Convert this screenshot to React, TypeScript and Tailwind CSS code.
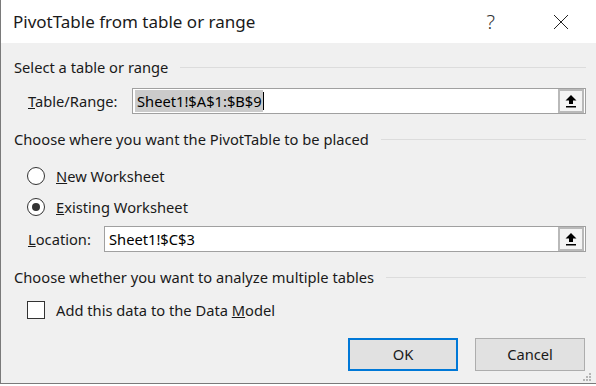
import React from "react";

const font = { fontFamily: '"Segoe UI", "Noto Sans", "Open Sans", sans-serif' };

function UploadIcon() {
  return (
    <svg width="12" height="14" viewBox="0 0 12 14">
      <path d="M6 1 L11.5 6.5 L8 6.5 L8 10 L4 10 L4 6.5 L0.5 6.5 Z" fill="#000" />
      <rect x="1" y="12" width="10" height="1.5" fill="#000" />
    </svg>
  );
}

function RangeInput({ children }: { children: React.ReactNode }) {
  return (
    <div className="flex-1 h-[26px] bg-white border border-[#a0a0a0] flex items-center pl-[1px] pr-[1px]">
      <div className="flex-1 flex items-center h-full">{children}</div>
      <div className="w-[26px] h-[24px] border-2 border-[#b9b9b9] bg-[#f4f4f4] flex items-center justify-center">
        <UploadIcon />
      </div>
    </div>
  );
}

function Heading({ text }: { text: string }) {
  return (
    <div className="h-[20px] flex items-center pl-[13px] pr-[11px]">
      <span className="text-[14.7px] text-[#1a1a1a] whitespace-nowrap">{text}</span>
      <div className="flex-1 h-px bg-[#dcdcdc] ml-[12px]" />
    </div>
  );
}

export default function App() {
  return (
    <div className="w-[596px] h-[386px] bg-white overflow-hidden" style={font}>
      <div className="w-[600px] h-[384px] border-l border-b border-[#7a7a7a] flex flex-col">
        <div className="h-[43px] bg-white flex items-center pl-[12px] shrink-0">
          <span className="text-[17px] text-[#1a1a1a] flex-1">PivotTable from table or range</span>
          <span className="text-[20px] font-light text-[#333] mr-[58px] mt-[1px]">?</span>
          <svg width="16" height="16" viewBox="0 0 16 16" className="mr-[31px]">
            <path d="M1 1 L15 15 M15 1 L1 15" stroke="#222" strokeWidth="1" />
          </svg>
        </div>
        <div className="flex-1 bg-[#f0f0f0] flex flex-col w-[596px]">
          <div className="h-[14px]" />
          <Heading text="Select a table or range" />
          <div className="h-[11px]" />
          <div className="h-[26px] flex items-center pl-[27px] pr-[11px]">
            <span className="text-[14.7px] text-[#1a1a1a] w-[104px]"><u>T</u>able/Range:</span>
            <RangeInput>
              <span className="h-[22px] flex items-center bg-[#cbcbcb] text-[14.7px] text-black pl-[2px] pr-[1px] ml-[1px]">Sheet1!$A$1:$B$9</span>
              <span className="w-px h-[18px] bg-black" />
            </RangeInput>
          </div>
          <div className="h-[15px]" />
          <Heading text="Choose where you want the PivotTable to be placed" />
          <div className="h-[17px]" />
          <div className="h-[20px] flex items-center pl-[26px]">
            <span className="w-[18px] h-[18px] rounded-full border border-[#333] bg-white" />
            <span className="text-[14.7px] text-[#1a1a1a] ml-[11px]"><u>N</u>ew Worksheet</span>
          </div>
          <div className="h-[11px]" />
          <div className="h-[20px] flex items-center pl-[26px]">
            <span className="w-[18px] h-[18px] rounded-full border border-[#333] bg-white flex items-center justify-center">
              <span className="w-[8px] h-[8px] rounded-full bg-[#333]" />
            </span>
            <span className="text-[14.7px] text-[#1a1a1a] ml-[11px]"><u>E</u>xisting Worksheet</span>
          </div>
          <div className="h-[9px]" />
          <div className="h-[26px] flex items-center pl-[27px] pr-[11px]">
            <span className="text-[14.7px] text-[#1a1a1a] w-[76px]"><u>L</u>ocation:</span>
            <RangeInput>
              <span className="text-[14.7px] text-black pl-[3px]">Sheet1!$C$3</span>
            </RangeInput>
          </div>
          <div className="h-[15px]" />
          <Heading text="Choose whether you want to analyze multiple tables" />
          <div className="h-[13px]" />
          <div className="h-[20px] flex items-center pl-[26px]">
            <span className="w-[18px] h-[18px] border border-[#333] bg-white" />
            <span className="text-[14.7px] text-[#1a1a1a] ml-[11px]">Add this data to the Data <u>M</u>odel</span>
          </div>
          <div className="h-[18px]" />
          <div className="h-[33px] flex justify-end pr-[12px] gap-[17px]">
            <button className="w-[110px] h-[33px] border-2 border-[#0078d7] bg-[#e1e1e1] text-[14.7px] text-[#1a1a1a]">OK</button>
            <button className="w-[110px] h-[33px] border border-[#adadad] bg-[#e1e1e1] text-[14.7px] text-[#1a1a1a]">Cancel</button>
          </div>
          <div className="flex-1 flex justify-end items-end pr-[6px] pb-[2px]">
            <svg width="8" height="8" viewBox="0 0 8 8">
              <rect x="6" y="0" width="2" height="2" fill="#b5b5b5" />
              <rect x="3" y="3" width="2" height="2" fill="#b5b5b5" />
              <rect x="6" y="3" width="2" height="2" fill="#b5b5b5" />
              <rect x="0" y="6" width="2" height="2" fill="#b5b5b5" />
              <rect x="3" y="6" width="2" height="2" fill="#b5b5b5" />
              <rect x="6" y="6" width="2" height="2" fill="#b5b5b5" />
            </svg>
          </div>
        </div>
      </div>
    </div>
  );
}
